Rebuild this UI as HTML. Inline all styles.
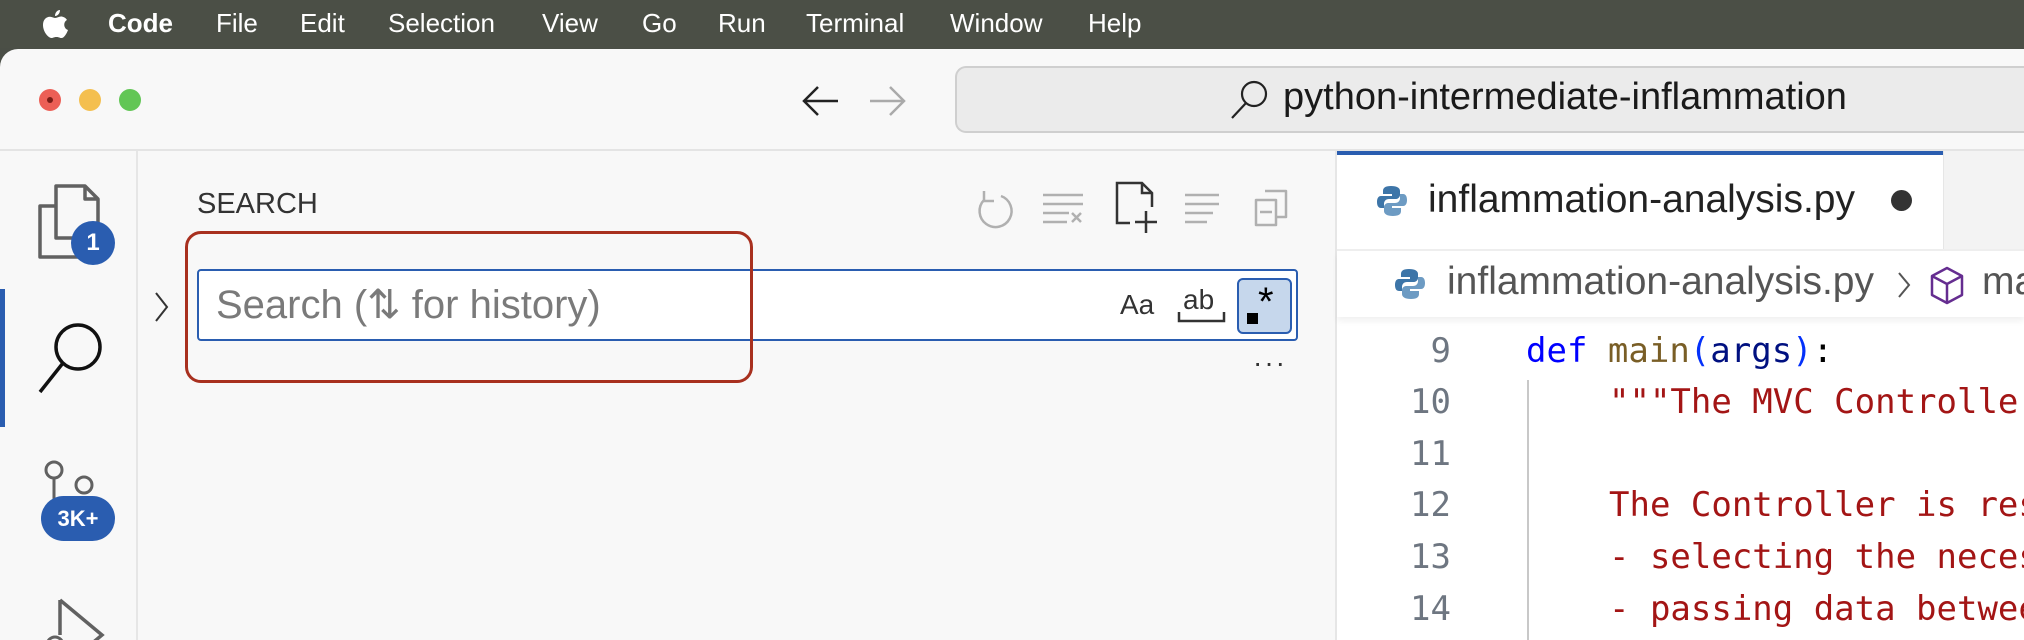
<!DOCTYPE html>
<html><head><meta charset="utf-8"><style>
*{margin:0;padding:0;box-sizing:border-box}
html,body{width:2024px;height:640px;overflow:hidden}
body{background:#4a4e46;font-family:"Liberation Sans",sans-serif;position:relative}
.abs{position:absolute}
.menu{position:absolute;top:0;left:0;width:2024px;height:48px;background:#4b4f46;color:#fff;font-size:26px}
.menu span{position:absolute;top:8px}
.win{position:absolute;left:0;top:49px;width:2024px;height:591px;background:#f8f8f8;border-top-left-radius:18px;overflow:hidden}
.mono{font-family:"DejaVu Sans Mono","Liberation Mono",monospace}
.ln{position:absolute;width:100px;left:1351px;text-align:right;color:#6e7681;font-size:34px}
.code{position:absolute;font-size:34px;white-space:pre}
</style></head><body>
<div class="menu">
<svg class="abs" style="left:41px;top:9px" width="28" height="30" viewBox="0 0 28 30"><path d="M19 1C19 4 17 7 14 7C14 4 16 1 19 1Z M14 9C16 9 18 7.5 20 7.5C22 7.5 24.5 8.5 26 11C22 13 22.5 19.5 27 21C25.5 25 23 29 20.5 29C18.5 29 18 28 15.5 28C13 28 12 29 10.5 29C7.5 29 2 23 2 16C2 11 5 7.8 9 7.8C11 7.8 12.5 9 14 9Z" fill="#fff"/></svg>
<span style="left:108px;font-weight:bold">Code</span>
<span style="left:216px">File</span>
<span style="left:300px">Edit</span>
<span style="left:388px">Selection</span>
<span style="left:542px">View</span>
<span style="left:642px">Go</span>
<span style="left:718px">Run</span>
<span style="left:806px">Terminal</span>
<span style="left:950px">Window</span>
<span style="left:1088px">Help</span>
</div>
<div class="win"></div>
<div class="abs" style="left:39px;top:89px;width:22px;height:22px;border-radius:50%;background:#ec5f56"></div>
<div class="abs" style="left:47px;top:97px;width:6px;height:6px;border-radius:50%;background:#7a1d17"></div>
<div class="abs" style="left:79px;top:89px;width:22px;height:22px;border-radius:50%;background:#f4bf4f"></div>
<div class="abs" style="left:119px;top:89px;width:22px;height:22px;border-radius:50%;background:#62c655"></div>
<svg class="abs" style="left:800px;top:84px" width="110" height="34"><path d="M4 17H38M18 3L4 17L18 31" stroke="#222" stroke-width="2.5" fill="none"/><path d="M76 17H110M96 3L110 17L96 31" stroke="#aaa" stroke-width="2.5" fill="none" transform="translate(-6,0)"/></svg>
<div class="abs" style="left:955px;top:66px;width:1069px;height:67px;background:#ebebeb;border:2px solid #cfcfcf;border-right:none;border-radius:11px 0 0 11px"></div>
<svg class="abs" style="left:1228px;top:78px" width="42" height="42"><circle cx="26" cy="16" r="12" stroke="#222" stroke-width="2.2" fill="none"/><path d="M18 25L4 40" stroke="#222" stroke-width="2.2"/></svg>
<div class="abs" style="left:1283px;top:76px;font-size:38px;color:#1a1a1a">python-intermediate-inflammation</div>
<div class="abs" style="left:0;top:149px;width:2024px;height:2px;background:#e4e4e4"></div>
<div class="abs" style="left:136px;top:151px;width:2px;height:489px;background:#e6e6e6"></div>
<div class="abs" style="left:0;top:289px;width:5px;height:138px;background:#2a5db0"></div>
<svg class="abs" style="left:30px;top:180px" width="90" height="90"><path d="M26 6H55L68 19V58H26Z M55 6V19H68 M26 26H10V77H50V58" stroke="#616161" stroke-width="3.5" fill="none" stroke-linejoin="round"/></svg>
<div class="abs" style="left:71px;top:221px;width:44px;height:44px;border-radius:50%;background:#2a5db0;color:#fff;font-weight:bold;font-size:24px;text-align:center;line-height:44px">1</div>
<svg class="abs" style="left:30px;top:315px" width="80" height="80"><circle cx="48" cy="32" r="22" stroke="#111" stroke-width="3.5" fill="none"/><path d="M33 48L10 77" stroke="#111" stroke-width="3.5"/></svg>
<svg class="abs" style="left:40px;top:455px" width="60" height="50"><circle cx="14" cy="15" r="8" stroke="#616161" stroke-width="3" fill="none"/><circle cx="44" cy="30" r="8" stroke="#616161" stroke-width="3" fill="none"/><path d="M14 23V50" stroke="#616161" stroke-width="3"/></svg>
<div class="abs" style="left:41px;top:496px;width:74px;height:45px;border-radius:23px;background:#2a5db0;color:#fff;font-weight:bold;font-size:22px;text-align:center;line-height:45px">3K+</div>
<svg class="abs" style="left:35px;top:595px" width="80" height="45"><path d="M25 5L67 40L55 50M25 5V40" stroke="#616161" stroke-width="3.5" fill="none"/><circle cx="20" cy="50" r="8" stroke="#616161" stroke-width="3" fill="none"/></svg>
<div class="abs" style="left:197px;top:188px;font-size:29px;color:#333">SEARCH</div>
<svg class="abs" style="left:970px;top:175px" width="330" height="60">
<path d="M33 13A16 16 0 1 1 16 17M16 8V18H26" stroke="#b0b0b0" stroke-width="2.5" fill="none" transform="translate(-2,8)"/>
<path d="M73 20H113M73 29H113M73 38H99M73 47H97M102 38L111 47M111 38L102 47" stroke="#b0b0b0" stroke-width="2.5" fill="none"/>
<path d="M160 48H147V8H172L182 18V32M172 8V18H182M176 36V58M165 47H187" stroke="#333" stroke-width="2.5" fill="none"/>
<path d="M215 20H249M215 29H249M215 38H243M215 47H237" stroke="#b0b0b0" stroke-width="2.5" fill="none"/>
<path d="M295 16H316V42H306M286 25H306V50H286Z M290 37H302" stroke="#b0b0b0" stroke-width="2.5" fill="none" stroke-linejoin="round"/>
</svg>
<svg class="abs" style="left:152px;top:290px" width="20" height="34"><path d="M4 3L15 17L4 31" stroke="#333" stroke-width="2" fill="none"/></svg>
<div class="abs" style="left:197px;top:269px;width:1101px;height:72px;background:#fff;border:2px solid #2a5db0;border-radius:4px"></div>
<div class="abs" style="left:216px;top:282px;font-size:40px;color:#7a7a7a">Search (⇅ for history)</div>
<div class="abs" style="left:1120px;top:289px;font-size:28px;color:#333">Aa</div>
<div class="abs" style="left:1183px;top:284px;font-size:28px;color:#333">ab</div>
<svg class="abs" style="left:1177px;top:310px" width="50" height="14"><path d="M2 2V11H47V2" stroke="#333" stroke-width="2.5" fill="none"/></svg>
<div class="abs" style="left:1237px;top:278px;width:55px;height:56px;background:#c6d7ec;border:2px solid #2a5db0;border-radius:6px"></div>
<div class="abs" style="left:1247px;top:313px;width:11px;height:11px;background:#000"></div>
<div class="abs" style="left:1258px;top:280px;font-size:40px;color:#000">*</div>
<div class="abs" style="left:1253px;top:347px;font-size:28px;color:#333;letter-spacing:2px">···</div>
<div class="abs" style="left:185px;top:231px;width:568px;height:152px;border:3px solid #a8301f;border-radius:16px"></div>
<div class="abs" style="left:1335px;top:151px;width:689px;height:489px;background:#fff;border-left:2px solid #e6e6e6"></div>
<div class="abs" style="left:1943px;top:151px;width:81px;height:98px;background:#f3f3f3;border-left:1px solid #e6e6e6"></div>
<div class="abs" style="left:1337px;top:151px;width:606px;height:4px;background:#2a5db0"></div>
<div class="abs" style="left:1337px;top:249px;width:687px;height:2px;background:#eee"></div>
<svg class="abs" style="left:1377px;top:184px" width="30" height="34"><path d="M14 2C8 2 6 4 6 7V10H15V12H4C1 12 0 15 0 18S1 24 4 24H7V20C7 17 9 15 12 15H19C21 15 23 13 23 11V7C23 4 20 2 14 2Z" fill="#3d75a8"/><path d="M16 32C22 32 24 30 24 27V24H15V22H26C29 22 30 19 30 16S29 10 26 10H23V14C23 17 21 19 18 19H11C9 19 7 21 7 23V27C7 30 10 32 16 32Z" fill="#6d9bc3"/></svg>
<div class="abs" style="left:1428px;top:178px;font-size:39px;color:#222">inflammation-analysis.py</div>
<div class="abs" style="left:1891px;top:190px;width:21px;height:21px;border-radius:50%;background:#333"></div>
<svg class="abs" style="left:1395px;top:267px" width="30" height="34"><path d="M14 2C8 2 6 4 6 7V10H15V12H4C1 12 0 15 0 18S1 24 4 24H7V20C7 17 9 15 12 15H19C21 15 23 13 23 11V7C23 4 20 2 14 2Z" fill="#3d75a8"/><path d="M16 32C22 32 24 30 24 27V24H15V22H26C29 22 30 19 30 16S29 10 26 10H23V14C23 17 21 19 18 19H11C9 19 7 21 7 23V27C7 30 10 32 16 32Z" fill="#6d9bc3"/></svg>
<div class="abs" style="left:1447px;top:260px;font-size:39px;color:#555">inflammation-analysis.py</div>
<svg class="abs" style="left:1895px;top:270px" width="20" height="30"><path d="M4 3L14 15L4 27" stroke="#555" stroke-width="2" fill="none"/></svg>
<svg class="abs" style="left:1929px;top:266px" width="36" height="40"><path d="M18 2L33 10V29L18 37L3 29V10Z M3 10L18 18L33 10M18 18V37" stroke="#652d90" stroke-width="2.5" fill="none" stroke-linejoin="round"/></svg>
<div class="abs" style="left:1982px;top:260px;font-size:39px;color:#555;white-space:nowrap;width:42px;overflow:hidden">ma</div>
<div class="abs" style="left:1337px;top:251px;width:687px;height:66px;box-shadow:0 4px 6px rgba(0,0,0,0.06)"></div>
<div class="abs" style="left:1527px;top:380px;width:2px;height:260px;background:#c8c8c8"></div>
<div class="mono abs" style="left:0;top:0;width:2024px;height:640px;overflow:hidden">
<div class="ln" style="top:331px">9</div>
<div class="ln" style="top:382px">10</div>
<div class="ln" style="top:434px">11</div>
<div class="ln" style="top:485px">12</div>
<div class="ln" style="top:537px">13</div>
<div class="ln" style="top:589px">14</div>
<div class="code" style="left:1526px;top:331px"><span style="color:#0000ff">def</span> <span style="color:#795e26">main</span><span style="color:#0431fa">(</span><span style="color:#001080">args</span><span style="color:#0431fa">)</span>:</div>
<div class="code" style="left:1609px;top:382px;color:#a31515">"""The MVC Controller</div>
<div class="code" style="left:1609px;top:485px;color:#a31515">The Controller is responsible</div>
<div class="code" style="left:1609px;top:537px;color:#a31515">- selecting the necessary</div>
<div class="code" style="left:1609px;top:589px;color:#a31515">- passing data between</div>
</div>
</body></html>
